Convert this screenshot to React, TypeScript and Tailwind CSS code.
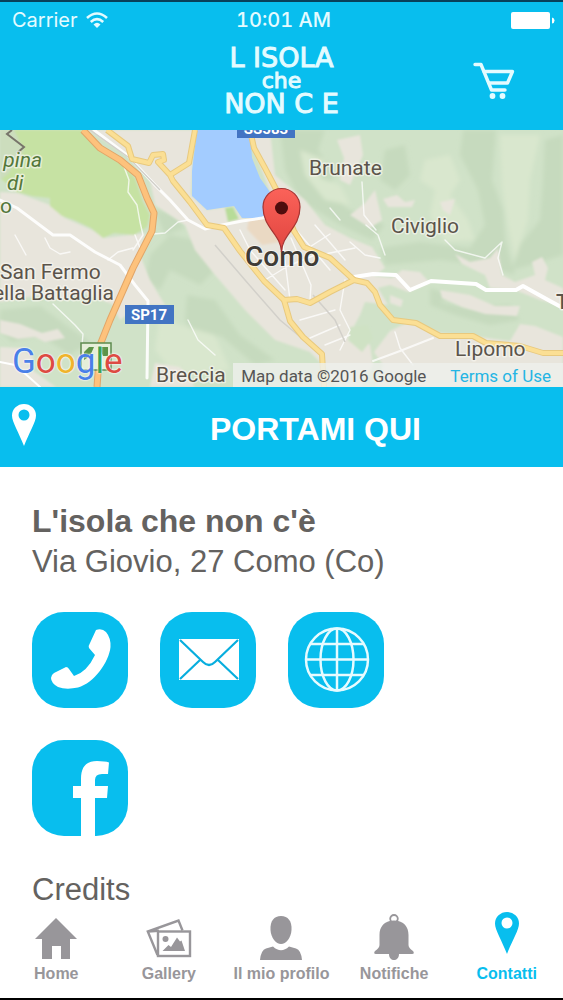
import React from "react";

function MapDrawing() {
  return (
    <svg
      viewBox="0 0 563 257"
      preserveAspectRatio="xMidYMid slice"
      className="block h-full w-full"
      role="img"
      aria-label="Mappa di Como"
    >
      <defs>
        <filter id="soft" x="-5%" y="-5%" width="110%" height="110%">
          <feGaussianBlur stdDeviation="1" />
        </filter>
        <filter id="softer" x="-5%" y="-5%" width="110%" height="110%">
          <feGaussianBlur stdDeviation="2" />
        </filter>
        <linearGradient id="pin" x1="0" y1="0" x2="0" y2="1">
          <stop offset="0" stopColor="#fb6259" />
          <stop offset="1" stopColor="#e0453f" />
        </linearGradient>
      </defs>
      <rect width="563" height="257" fill="#d0e2c8" />

      {/* woodland shading */}
      <g filter="url(#softer)">
        <g fill="#c6dabe">
          <path d="M280 0L325 0 318 20 335 45 325 62 350 80 385 95 372 110 340 95 300 70 285 40Z" />
          <path d="M463 0L496 0 492 50 503 80 505 110 515 145 480 135 440 130 385 135 380 118 420 112 470 118 485 95 478 60 460 25Z" />
          <path d="M545 10L563 5 563 125 530 135 512 140 520 115 540 90 543 50Z" />
          <path d="M187 165L215 170 240 205 275 230 255 235 220 205 200 215 185 190Z" />
          <path d="M150 125L170 105 195 110 215 140 200 155 170 140 160 160 145 150Z" />
          <path d="M0 180L40 176 66 195 90 212 70 225 40 205 12 212 0 200Z" />
          <path d="M430 158L450 165 440 172 470 178 510 175 520 190 490 195 455 185 430 175Z" />
          <path d="M385 20L405 15 410 45 395 60 380 50Z" />
          <path d="M155 80L175 85 185 98 165 105Z" />
        </g>
        <g fill="#d9e7ce">
          <path d="M500 5L540 5 530 50 528 90 515 130 508 95 502 55Z" />
          <path d="M425 30L450 25 460 50 450 65 468 90 475 110 445 112 430 85 435 60 420 50Z" />
          <path d="M300 20L325 30 320 48 340 55 350 75 325 70 305 45Z" />
          <path d="M160 185L180 195 215 205 230 240 175 245 155 220Z" />
        </g>
      </g>

      <g filter="url(#soft)">
        {/* built-up areas */}
        <g fill="#e8e5dc">
          <path d="M88 0L194 0 191 65 207 80 233 76 242 88 260 88 270 62 250 8 250 0 270 0 275 45 305 70 325 95 350 108 372 117 385 138 374 146 392 148 402 140 420 142 430 153 408 162 390 155 378 158 388 175 365 172 360 185 352 200 370 215 373 235 361 257 337 257 325 237 310 222 275 210 245 180 215 145 195 120 185 95 155 75 150 50 130 27Z" />
          <path d="M0 62L18 63 50 75 65 88 92 100 104 108 130 105 145 103 140 125 150 150 165 175 140 175 120 190 112 174 85 164 60 170 35 166 0 172Z" />
          <path d="M0 190L20 194 42 203 58 199 65 208 45 212 35 207 18 209 0 203Z" />
          <path d="M0 217L20 218 34 228 28 237 56 257 0 257Z" />
          <path d="M390 201L408 192 440 203 480 207 510 211 520 194 535 196 563 207 563 257 376 257 383 235 374 222Z" />
          <path d="M455 124L470 132 490 128 498 118 502 145 515 152 535 145 532 132 542 127 548 138 545 150 563 158 563 176 540 170 515 160 490 158 485 145 462 134Z" />
          <path d="M440 160L470 165 495 176 520 176 517 186 485 184 462 177 442 168Z" />
          <path d="M383 69L397 65 405 72 415 70 412 77 388 77Z" />
          <path d="M440 72L455 69 450 85 443 80Z" />
          <path d="M337 10L360 5 363 25 350 55 340 50 344 28Z" />
          <path d="M375 60L382 90 370 98 350 85 365 73Z" />
          <path d="M155 233L180 237 195 257 150 257Z" />
          <path d="M390 165L403 170 401 177 390 173Z" />
        </g>
        <path d="M250 82L270 88 280 112 262 115 247 99Z" fill="#ead9c3" />
        <path d="M13 0L83 0 101 21 121 32 135 48 143 72 150 85 147 97 134 105 114 103 103 108 91 98 74 90 62 86 50 76 50 68 32 66 17 62 0 48 0 12Z" fill="#c6e2a3" />
        <path d="M0 0L14 0 24 20 8 44 0 50Z" fill="#ccddbd" />
        <path d="M225 78L233 77 239 89 228 92Z" fill="#b7dc98" />
        <path d="M350 197L368 195 373 208 362 222 348 210Z" fill="#cfe2c4" />
      </g>

      <path d="M197 0L250 0 252 28 260 48 270 62 276 82 259 88 242 88 234 76 207 80 192 66 192 41Z" fill="#a3ccff" />

      {/* minor roads */}
      <g fill="none" stroke="#fff" strokeLinejoin="round" strokeLinecap="round">
        <g strokeWidth="1.4" opacity="0.75">
          <path d="M123 34L129 50 128 62 137 75 140 92 143 105 133 120" />
          <path d="M53 174L75 195 83 204 82 215M26 125L15 105M45 108L50 118 60 124 70 122" />
          <path d="M153 104L165 103 178 92 188 90M133 118L118 122 108 130M135 105L140 118" />
          <path d="M240 100L250 120 285 160M265 150L288 136 315 125M283 115L290 170M291 108L311 155 310 170M298 102L330 140M315 95L345 130M305 120L330 104M320 125L355 118M330 78L340 90M362 52L364 85 376 100" />
          <path d="M445 110L455 120 485 128 502 112 498 128 503 145M395 202L400 218 413 235M300 190L335 180M310 208L340 195M325 215L350 205M345 150L340 180 350 200 340 220" />
          <path d="M188 190L198 210 215 225M366 95L378 105 385 125M350 112L365 125 380 128" />
          <path d="M373 231L400 221 433 208" strokeWidth="2" />
        </g>
        <path d="M0 70L17 78 53 105 70 105 95 122 120 135 135 155 148 171 147 248" strokeWidth="3" opacity="0.9" />
        <path d="M94 0L127 25 155 55 170 70 188 90 205 99 222 95 242 91 262 88 272 86" strokeWidth="3" opacity="0.9" />
        <path d="M354 147L373 144 396 145 410 160 431 151 476 154 486 160 516 160 523 156 550 171 563 178" strokeWidth="4" />
        <path d="M0 232L15 235 30 248 40 257" strokeWidth="2" />
      </g>
      <path d="M90 0L128 27 160 60M215 115L245 150 280 190 310 215M313 165L335 190 345 212" fill="none" stroke="#d2d0ca" strokeWidth="1.5" />

      {/* main roads: casing, then fill */}
      {[
        { c: "#e8c97e", w: 6 },
        { c: "#fbdf94", w: 4 },
      ].map((s) => (
        <g key={s.c} fill="none" stroke={s.c} strokeWidth={s.w} strokeLinejoin="round">
          <path d="M107 0L128 16 132 29 149 33 153 25 163 24 164 30 158 32 170 45 173 51 190 72 207 95 224 98 240 121 264 151 284 170 297 169 310 173 330 162 354 150 367 153 375 162 380 175 393 190 416 193 440 206 473 206 486 213 520 216 543 223 563 223" />
          <path d="M170 45L189 33 195 0" />
          <path d="M250 0L254 18 265 38 277 61 294 101 304 117 330 128 354 150" />
          <path d="M284 170L290 191 303 207 322 224 324 257" />
        </g>
      ))}
      <path d="M83 0L100 18 120 30 138 45 147 68 154 83 152 101 133 138 110 190 100 215 97 257" fill="none" stroke="#e2a567" strokeWidth="7" strokeLinejoin="round" />
      <path d="M83 0L100 18 120 30 138 45 147 68 154 83 152 101 133 138 110 190 100 215 97 257" fill="none" stroke="#fdc27c" strokeWidth="5" strokeLinejoin="round" />
      <path d="M12 0L7 4 24 17 17 23" fill="none" stroke="#77746a" strokeWidth="2" />

      {/* road signs */}
      <rect x="237" y="-9" width="58" height="17" fill="#4274c3" />
      <rect x="125" y="175" width="49" height="19" fill="#4274c3" />
      <g fill="#fff" fontFamily="Roboto, sans-serif" fontWeight="700" fontSize="15" textAnchor="middle">
        <text x="266" y="4">SS583</text>
        <text x="149" y="190">SP17</text>
      </g>
      <rect x="81" y="213" width="30" height="27" fill="#e6efd9" stroke="#5d8b4e" strokeWidth="1.5" />
      <path d="M84 222L89 217 94 217 90 226 84 230ZM99 217L108 217 108 226 103 226Z" fill="#5d9448" />

      {/* place names */}
      <g
        fontFamily="Roboto, sans-serif"
        fill="#5b544b"
        stroke="#f7f6ef"
        strokeWidth="3"
        strokeOpacity="0.7"
        strokeLinejoin="round"
        paintOrder="stroke"
        fontSize="21"
      >
        <text x="309" y="45">Brunate</text>
        <text x="391" y="103">Civiglio</text>
        <text x="455" y="226">Lipomo</text>
        <text x="556" y="179" fontWeight="500">T</text>
        <text x="0" y="149">San Fermo</text>
        <text x="114" y="170" textAnchor="end">ella Battaglia</text>
        <text x="156" y="252">Breccia</text>
        <g fill="#53773a" fontStyle="italic">
          <text x="42" y="37" textAnchor="end">pina</text>
          <text x="7" y="60">di</text>
          <text x="0" y="83" fontStyle="normal">o</text>
        </g>
      </g>

      <text x="245" y="136" fontFamily="Roboto, sans-serif" fontSize="28" fontWeight="500" fill="#403c36" stroke="#fff" strokeOpacity="0.6" strokeWidth="2" paintOrder="stroke">
        Como
      </text>
      <path d="M281.500 122C281 104 263 98 263 77A18.500 18.500 0 0 1 300 77C300 98 282 104 281.500 122Z" fill="url(#pin)" stroke="#a73432" strokeWidth="1.200" />
      <circle cx="281.500" cy="78" r="6.500" fill="#4f0d0d" />
    </svg>
  );
}

function Wifi() {
  return (
    <svg viewBox="0 0 22 17" className="h-[17px] w-[22px]" fill="none" stroke="#e4fbff" strokeWidth="2.600" aria-hidden="true">
      <path d="M1 6Q11 -3 21 6M4.800 10Q11 4.400 17.200 10" />
      <path d="M7.500 12.500Q11 9.200 14.500 12.500L11 16Z" fill="#e4fbff" stroke="none" />
    </svg>
  );
}

function Cart() {
  return (
    <svg viewBox="0 0 42 37" className="h-[37px] w-[42px]" fill="none" stroke="#e4fbff" strokeWidth="3.400" strokeLinejoin="round" strokeLinecap="round" aria-hidden="true">
      <path d="M2 2.500L8 2.500 18.500 28 32 28" />
      <path d="M11 9.500L39.500 9.500 34.500 21 16 21" />
      <circle cx="19.500" cy="34" r="2.900" fill="#e4fbff" stroke="none" />
      <circle cx="29.500" cy="34" r="2.900" fill="#e4fbff" stroke="none" />
    </svg>
  );
}

function PlacePin({ className }: { className: string }) {
  return (
    <svg viewBox="0 0 24 42" className={className} fill="currentColor" fillRule="evenodd" aria-hidden="true">
      <path d="M12 0A12 11.500 0 0 1 24 11.500C24 18 17 29 12 42C7 29 0 18 0 11.500A12 11.500 0 0 1 12 0ZM12 5.500A5.500 5.500 0 1 0 12 16.500A5.500 5.500 0 1 0 12 5.500Z" />
    </svg>
  );
}

function Tile({ label, children }: { label: string; children: React.ReactNode }) {
  return (
    <a href="#" aria-label={label} className="block size-24 overflow-hidden rounded-[32px] bg-[#08beee] text-white">
      <svg viewBox="0 0 96 96" className="size-full" aria-hidden="true">
        {children}
      </svg>
    </a>
  );
}

function HomeIcon() {
  return (
    <svg viewBox="0 0 42 42" className="h-[42px] w-[42px]" fill="currentColor" aria-hidden="true">
      <path d="M21 0L42 21 35 21 35 41 26 41 26 28 17 28 17 41 7 41 7 21 0 21Z" />
    </svg>
  );
}

function GalleryIcon() {
  return (
    <svg viewBox="0 0 46 42" className="h-[42px] w-[46px]" fill="none" stroke="currentColor" strokeWidth="2.400" aria-hidden="true">
      <path d="M11.500 37L1.800 13.500 32.500 2.500 36.500 12.500M2 13.500L13 12.800" />
      <rect x="12" y="13.500" width="32" height="24.500" />
      <circle cx="19.500" cy="21" r="3" fill="currentColor" stroke="none" />
      <path d="M16.500 33L22.500 27 25 29 31 19.500 34 23.500 35.500 22.500 39 33Z" fill="currentColor" stroke="none" />
    </svg>
  );
}

function ProfileIcon() {
  return (
    <svg viewBox="0 0 42 44" className="h-[44px] w-[42px]" fill="currentColor" aria-hidden="true">
      <path d="M21 0C28 0 32 5 31.500 14C31 22 26 28 21 28C16 28 11 22 10.500 14C10 5 14 0 21 0Z" />
      <path d="M13 30.500Q21 38 29 30.500L36 32.500Q41 34 42 44L0 44Q1 34 6 32.500Z" />
    </svg>
  );
}

function BellIcon() {
  return (
    <svg viewBox="0 0 40 46" className="h-[46px] w-[40px]" fill="currentColor" aria-hidden="true">
      <circle cx="20" cy="4.800" r="3.800" fill="none" stroke="currentColor" strokeWidth="1.800" />
      <path d="M20 6.500C30 6.500 34.500 13 34.500 21L34.500 31Q34.500 34 39 37Q41 40 38 40L25 40C25 48 15 48 15 40L2 40Q-1 40 1 37Q5.500 34 5.500 31L5.500 21C5.500 13 10 6.500 20 6.500Z" />
    </svg>
  );
}

const tabs = [
  { label: "Home", icon: <HomeIcon /> },
  { label: "Gallery", icon: <GalleryIcon /> },
  { label: "Il mio profilo", icon: <ProfileIcon /> },
  { label: "Notifiche", icon: <BellIcon /> },
  { label: "Contatti", icon: <PlacePin className="h-[42px] w-6" />, active: true },
];

export default function App() {
  return (
    <div className="flex min-h-screen flex-col border-t-2 border-b-2 border-t-[#08405a] border-b-black bg-white font-['Liberation_Sans',Arial,sans-serif] text-[#646260]">
      <header className="h-32 bg-[#08beee] text-[#e4fbff]">
        <div className="grid h-9 grid-cols-3 items-center pr-2 pl-3 font-['Inter',sans-serif] text-[20px]">
          <div className="flex items-center gap-2">
            <span>Carrier</span>
            <Wifi />
          </div>
          <span className="text-center font-medium whitespace-nowrap tabular-nums">10:01 AM</span>
          <svg viewBox="0 0 44 17" className="h-[17px] w-11 justify-self-end" fill="#fff" aria-label="Batteria">
            <rect width="39" height="17" rx="2" />
            <path d="M41 5.500Q43.500 6 43.500 8.500T41 11.500Z" />
          </svg>
        </div>
        <div className="grid grid-cols-3 items-center px-12 pt-2">
          <h1 className="col-start-2 justify-self-center text-center font-['DejaVu_Sans',sans-serif] text-[27px] leading-[23px] font-medium whitespace-nowrap [-webkit-text-stroke:1px_#e4fbff]">
            <span className="block">L ISOLA</span>
            <span className="block text-[22px]">che</span>
            <span className="block">NON C E</span>
          </h1>
          <button type="button" aria-label="Carrello" className="justify-self-end">
            <Cart />
          </button>
        </div>
      </header>

      <section className="relative h-[257px] overflow-hidden">
        <MapDrawing />
        <div className="absolute bottom-0 left-3 flex font-['Roboto',sans-serif] text-[35px] leading-[50px] [text-shadow:0_0_2px_#fff,0_0_2px_#fff]">
          <span className="text-[#4a80e8]">G</span>
          <span className="text-[#dd4b42]">o</span>
          <span className="text-[#efb42c]">o</span>
          <span className="text-[#4a80e8]">g</span>
          <span className="text-[#3aa356]">l</span>
          <span className="text-[#dd4b42]">e</span>
        </div>
        <div className="absolute right-0 bottom-0 flex h-6 items-center gap-6 bg-[#eef0ec]/80 pt-1 pr-3 pl-2 font-['Roboto',sans-serif] text-[17px] whitespace-nowrap text-[#555]">
          <span>Map data ©2016 Google</span>
          <a href="#" className="text-[#25b5e4]">Terms of Use</a>
        </div>
      </section>

      <button type="button" className="flex h-20 items-center bg-[#08beee] pl-3 text-white">
        <PlacePin className="mb-1 h-[42px] w-6" />
        <span className="flex-1 pt-1 pl-8 text-center text-[32px] leading-9 font-bold">PORTAMI QUI</span>
      </button>

      <main className="flex-1 px-8 pt-9">
        <h2 className="text-[32px] leading-[37px] font-bold">L'isola che non c'è</h2>
        <p className="pt-1 text-[31px] leading-9">Via Giovio, 27 Como (Co)</p>
        <div className="grid w-fit grid-cols-3 gap-8 pt-8">
          <Tile label="Telefono">
            <path
              fill="currentColor"
              d="M64 18Q70 16 74 20Q79 26 78.500 35C77 50 62 71 46 75.500Q34 78 26 75Q19 71 19 66Q19 63 22 61L34 55Q36 55 37 57L42 64Q55 60 63 43L57 36Q56 34 58 31Z"
            />
          </Tile>
          <Tile label="Email">
            <g>
              <rect x="19" y="27" width="60" height="41" fill="currentColor" />
              <path d="M20 28L43 50Q49 56 55 50L78 28M20 67L40 48M78 67L58 48" fill="none" stroke="#08aede" strokeWidth="2.200" />
            </g>
          </Tile>
          <Tile label="Sito web">
            <g fill="none" stroke="#e6fbff" strokeWidth="2.500">
              <circle cx="49" cy="47.500" r="31" />
              <ellipse cx="49" cy="47.500" rx="16.500" ry="31" />
              <path d="M49 17V78M18 47.500H80M23 32H75M23 63H75" />
            </g>
          </Tile>
          <Tile label="Facebook">
            <path
              fill="currentColor"
              d="M49 96V58H41V46H49V39C49 27 54 21 65 21Q73 21 77 22.500L76 34H70Q63 34 63 40V46H76L75 58H63V96Z"
            />
          </Tile>
        </div>
        <h3 className="pt-9 text-[31px] leading-9">Credits</h3>
      </main>

      <nav className="grid grid-cols-5 pt-1 pb-[14px] text-[#98969a]">
        {tabs.map((t) => (
          <a
            key={t.label}
            href="#"
            aria-current={t.active ? "page" : undefined}
            className={
              t.active
                ? "flex flex-col items-center gap-1 text-[#08beee]"
                : "flex flex-col items-center gap-1"
            }
          >
            <span className={t.active ? "flex h-12 items-start" : "flex h-12 items-end"}>{t.icon}</span>
            <span className="text-[16px] leading-5 font-bold whitespace-nowrap">{t.label}</span>
          </a>
        ))}
      </nav>
    </div>
  );
}
